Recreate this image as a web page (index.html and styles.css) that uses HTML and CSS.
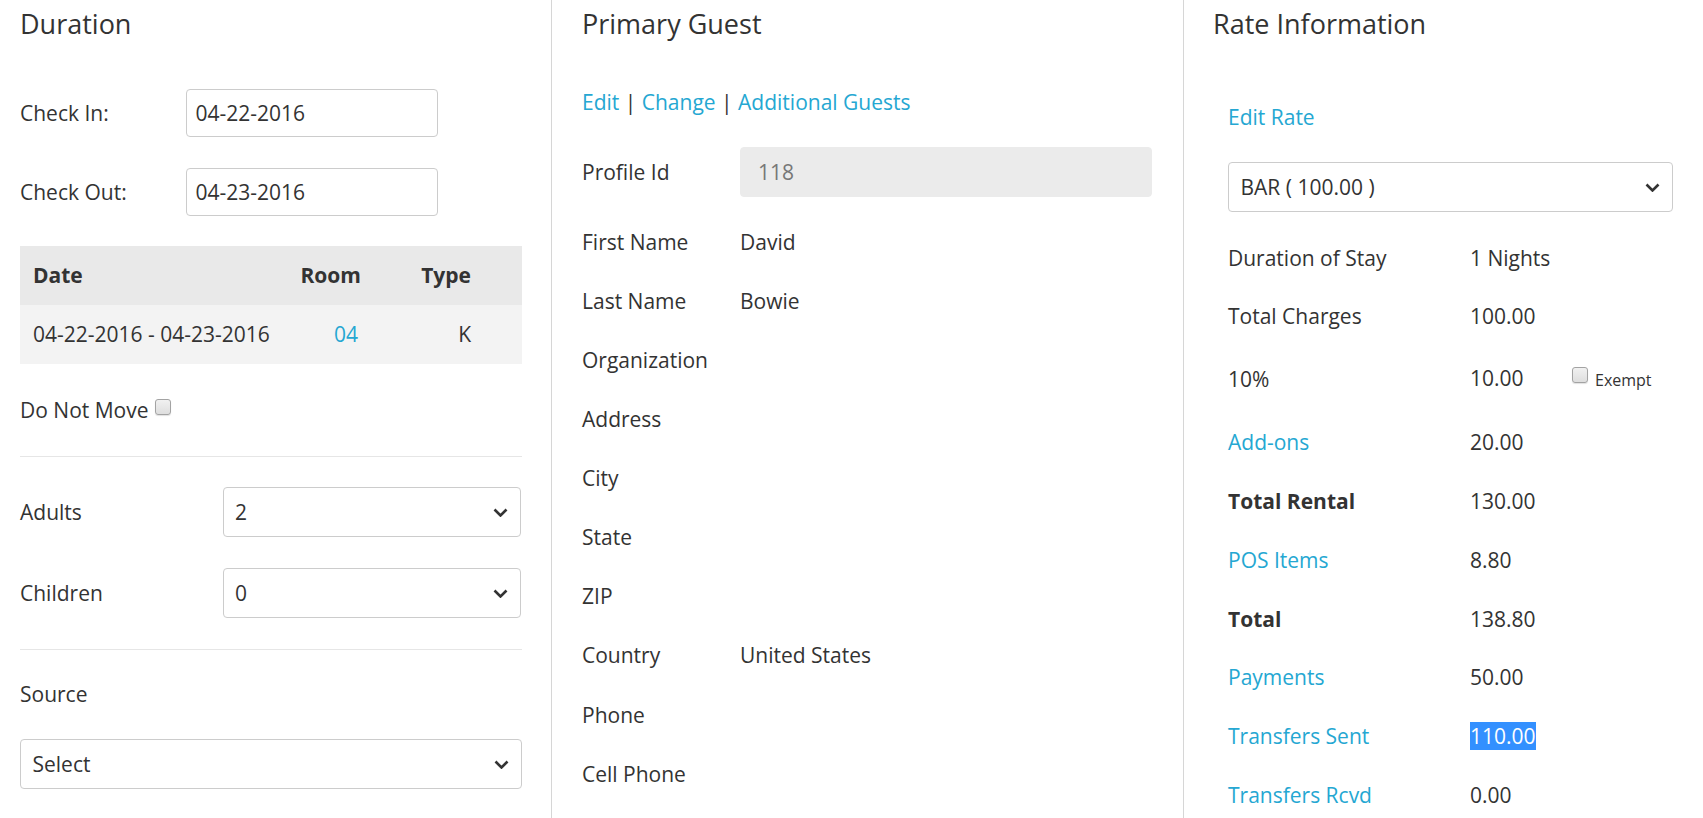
FILE: index.html
```html
<!DOCTYPE html>
<html lang="en">
<head>
<meta charset="utf-8">
<title>Reservation</title>
<link rel="stylesheet" href="styles.css">
</head>
<body>
<div class="page">
  <section class="col col-duration">
    <h3 class="col-title">Duration</h3>
    <div class="date-row date-row--first">
      <label class="lbl">Check In:</label>
      <div class="text-input">04-22-2016</div>
    </div>
    <div class="date-row">
      <label class="lbl">Check Out:</label>
      <div class="text-input">04-23-2016</div>
    </div>
    <table class="stay-table">
      <colgroup><col class="c-date"><col class="c-room"><col class="c-type"></colgroup>
      <thead>
        <tr><th class="t-date">Date</th><th class="t-room">Room</th><th class="t-type">Type</th></tr>
      </thead>
      <tbody>
        <tr><td class="t-date">04-22-2016 - 04-23-2016</td><td class="t-room t-room--val"><a class="link" href="#">04</a></td><td class="t-type">K</td></tr>
      </tbody>
    </table>
    <div class="do-not-move">Do Not Move<input type="checkbox" class="cb cb--dnm"></div>
    <hr class="divider">
    <div class="select-row select-row--first">
      <label class="lbl">Adults</label>
      <div class="select"><span>2</span><svg class="chev" viewBox="0 0 15 9" width="15" height="9"><path d="M1.5 1.5 L7.5 7.5 L13.5 1.5" fill="none" stroke="#333" stroke-width="2.6"/></svg></div>
    </div>
    <div class="select-row">
      <label class="lbl">Children</label>
      <div class="select"><span>0</span><svg class="chev" viewBox="0 0 15 9" width="15" height="9"><path d="M1.5 1.5 L7.5 7.5 L13.5 1.5" fill="none" stroke="#333" stroke-width="2.6"/></svg></div>
    </div>
    <hr class="divider divider--second">
    <div class="source-label">Source</div>
    <div class="select select--full"><span>Select</span><svg class="chev" viewBox="0 0 15 9" width="15" height="9"><path d="M1.5 1.5 L7.5 7.5 L13.5 1.5" fill="none" stroke="#333" stroke-width="2.6"/></svg></div>
  </section>

  <section class="col col-guest">
    <h3 class="col-title">Primary Guest</h3>
    <div class="guest-links"><a class="link" href="#">Edit</a> | <a class="link" href="#">Change</a> | <a class="link" href="#">Additional Guests</a></div>
    <div class="profile-row">
      <span class="lbl">Profile Id</span>
      <div class="readonly-input">118</div>
    </div>
    <div class="info-list">
      <div class="info-row"><span>First Name</span><span>David</span></div>
      <div class="info-row"><span>Last Name</span><span>Bowie</span></div>
      <div class="info-row"><span>Organization</span><span></span></div>
      <div class="info-row"><span>Address</span><span></span></div>
      <div class="info-row"><span>City</span><span></span></div>
      <div class="info-row"><span>State</span><span></span></div>
      <div class="info-row"><span>ZIP</span><span></span></div>
      <div class="info-row"><span>Country</span><span>United States</span></div>
      <div class="info-row"><span>Phone</span><span></span></div>
      <div class="info-row"><span>Cell Phone</span><span></span></div>
    </div>
  </section>

  <section class="col col-rate">
    <h3 class="col-title">Rate Information</h3>
    <div class="rate-body">
      <div class="edit-rate"><a class="link" href="#">Edit Rate</a></div>
      <div class="select select--rate"><span>BAR ( 100.00 )</span><svg class="chev" viewBox="0 0 15 9" width="15" height="9"><path d="M1.5 1.5 L7.5 7.5 L13.5 1.5" fill="none" stroke="#333" stroke-width="2.6"/></svg></div>
      <div class="rate-list">
        <div class="rate-row"><span>Duration of Stay</span><span>1 Nights</span></div>
        <div class="rate-row"><span>Total Charges</span><span>100.00</span></div>
        <div class="rate-row rate-row--tall"><span>10%</span><span><span class="val-fixed">10.00</span><input type="checkbox" class="cb cb--exempt"><span class="exempt">Exempt</span></span></div>
        <div class="rate-row"><a class="link" href="#">Add-ons</a><span>20.00</span></div>
        <div class="rate-row"><strong>Total Rental</strong><span>130.00</span></div>
        <div class="rate-row"><a class="link" href="#">POS Items</a><span>8.80</span></div>
        <div class="rate-row"><strong>Total</strong><span>138.80</span></div>
        <div class="rate-row"><a class="link" href="#">Payments</a><span>50.00</span></div>
        <div class="rate-row"><a class="link" href="#">Transfers Sent</a><span><span class="selected">110.00</span></span></div>
        <div class="rate-row"><a class="link" href="#">Transfers Rcvd</a><span>0.00</span></div>
      </div>
    </div>
  </section>
</div>
</body>
</html>
```

FILE: styles.css
```css
* { box-sizing: border-box; }

html, body {
  margin: 0;
  padding: 0;
  height: 818px;
  overflow: hidden;
  background: #fff;
}

body {
  font-family: "Open Sans", "Liberation Sans", sans-serif;
  font-size: 21px;
  color: #333;
}

.page {
  display: flex;
  height: 818px;
}

.col {
  height: 818px;
}

.col-duration {
  width: 552px;
  padding: 0 29px 0 20px;
  border-right: 1px solid #d6d6d6;
}

.col-guest {
  width: 632px;
  padding: 0 31px 0 30px;
  border-right: 1px solid #d6d6d6;
}

.col-rate {
  flex: 1;
  padding: 0 30px 0 29px;
}

.col-title {
  margin: 9px 0 0;
  font-size: 27px;
  font-weight: 400;
  line-height: 30px;
  color: #333;
}

.link {
  color: #25a7d2;
  text-decoration: none;
}

.lbl {
  font-weight: 400;
}

/* ---------- Duration column ---------- */
.date-row {
  display: grid;
  grid-template-columns: 165.5px 252px;
  align-items: center;
  height: 48px;
  margin-top: 31px;
}

.date-row--first {
  margin-top: 49.5px;
}

.text-input {
  height: 48px;
  border: 1px solid #ccc;
  border-radius: 4px;
  padding-left: 9px;
  display: flex;
  align-items: center;
}

.stay-table {
  width: 100%;
  margin-top: 30.5px;
  border-collapse: collapse;
  table-layout: fixed;
}

.c-date { width: 241px; }
.c-room { width: 100px; }
.c-type { width: 161px; }

.stay-table th,
.stay-table td {
  height: 58.75px;
  padding: 0;
  line-height: 1.36;
  vertical-align: middle;
  white-space: nowrap;
}

.stay-table th {
  background: #e9e9e9;
  font-weight: 700;
}

.stay-table td {
  background: #f3f3f3;
}

.t-date {
  text-align: left;
  padding-left: 13px !important;
}

.t-room {
  text-align: right;
}

.t-room--val {
  padding-right: 3px !important;
}

.t-type {
  text-align: right;
  padding-right: 51px !important;
}

.do-not-move {
  margin-top: 31.7px;
  line-height: 30px;
  height: 30px;
}

.cb {
  -webkit-appearance: none;
  appearance: none;
  display: inline-block;
  width: 16px;
  height: 16px;
  margin: 0 0 3px 6px;
  vertical-align: baseline;
  border: 1px solid #a3a3a3;
  border-radius: 3px;
  background: linear-gradient(#f1f1f1, #dedede);
  box-shadow: 0 1px 1px rgba(0, 0, 0, 0.12);
}

.divider {
  margin: 31px 0 0;
  border: 0;
  border-top: 1px solid #e6e6e6;
  height: 0;
}

.select-row {
  display: grid;
  grid-template-columns: 202.6px 1fr;
  align-items: center;
  height: 50px;
  margin-top: 31px;
}

.select-row--first {
  margin-top: 30.3px;
}

.select {
  height: 50px;
  border: 1px solid #ccc;
  border-radius: 4px;
  padding: 0 12px 0 11.5px;
  display: flex;
  align-items: center;
  justify-content: space-between;
  margin-right: 1px;
}

.chev {
  display: block;
  flex: none;
}

.source-label {
  margin-top: 28.2px;
  line-height: 30px;
  height: 30px;
}

.select--full {
  margin-top: 30.8px;
  margin-right: 0;
}

/* ---------- Guest column ---------- */
.guest-links {
  margin-top: 47.85px;
  line-height: 30px;
  height: 30px;
}

.profile-row {
  display: grid;
  grid-template-columns: 158px 1fr;
  align-items: center;
  height: 50px;
  margin-top: 30.15px;
}

.readonly-input {
  height: 50px;
  background: #ebebeb;
  border: 1px solid #ebebeb;
  border-radius: 4px;
  padding-left: 17px;
  color: #777;
  display: flex;
  align-items: center;
}

.info-list {
  margin-top: 15.3px;
}

.info-row {
  display: grid;
  grid-template-columns: 158px 1fr;
  align-items: center;
  height: 59.1px;
  line-height: 30px;
}

/* ---------- Rate column ---------- */
.rate-body {
  padding-left: 15px;
}

.edit-rate {
  margin-top: 62.85px;
  line-height: 30px;
  height: 30px;
}

.select--rate {
  margin-top: 30.65px;
  margin-right: 0;
}

.rate-list {
  margin-top: 15.65px;
}

.rate-row {
  display: grid;
  grid-template-columns: 242px 1fr;
  align-items: center;
  height: 58.8px;
  line-height: 30px;
}

.rate-row--tall {
  height: 67px;
}

.rate-row strong {
  font-weight: 700;
}

.val-fixed {
  display: inline-block;
  width: 98px;
}

.cb--exempt {
  margin: 0 7px 3px 4px;
}

.exempt {
  font-size: 16px;
}

.selected {
  background: #3390ff;
  color: #fff;
}
```
